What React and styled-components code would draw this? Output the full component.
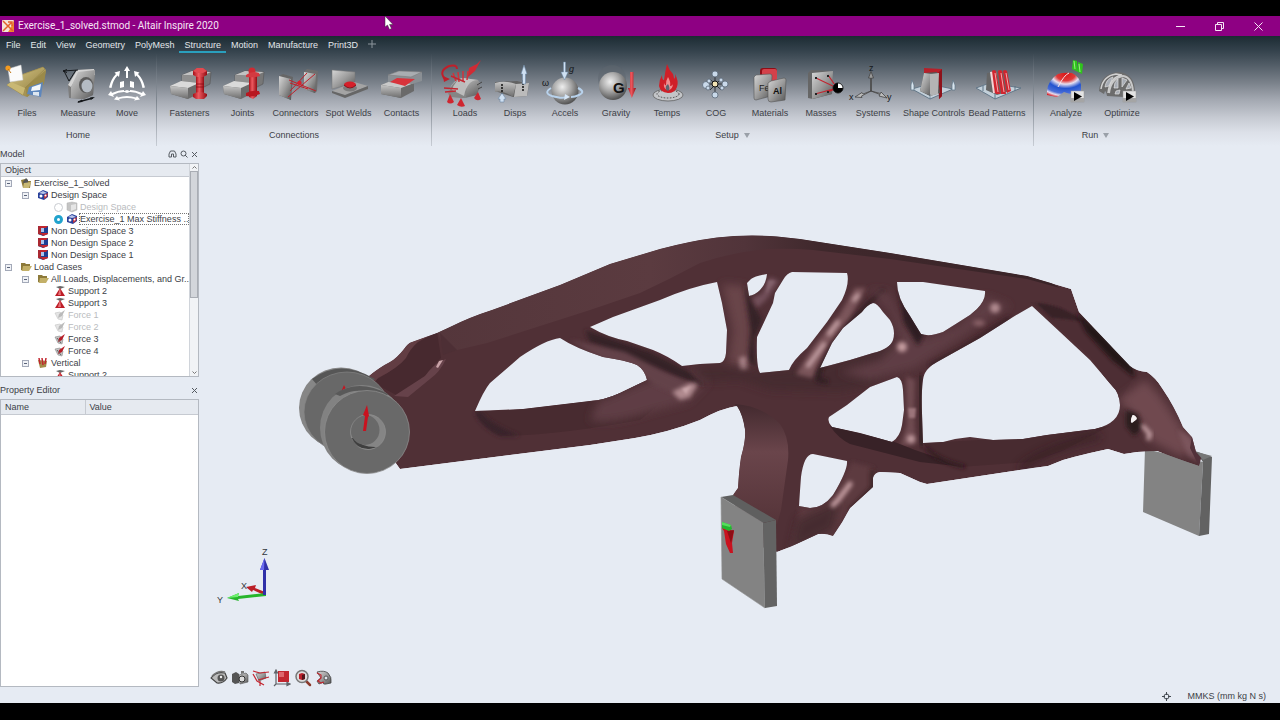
import React, { useState } from "react";
import styled, { createGlobalStyle } from "styled-components";

const GlobalStyle = createGlobalStyle`
  * {
    box-sizing: border-box;
  }
  body {
    margin: 0;
    background: #000;
    font-family: "Liberation Sans", Arial, sans-serif;
    font-size: 9px;
    line-height: 12px;
    color: #3c4046;
  }
  button {
    font: inherit;
    color: inherit;
    background: none;
    border: 0;
    padding: 0;
  }
`;

const Screen = styled.div`
  height: 100vh;
  padding: 16px 0 17px;
  background: #000;
`;

const Window = styled.div`
  position: relative;
  height: 100%;
  display: flex;
  flex-direction: column;
  background: #e6ebf3;
`;

const TitleBar = styled.header`
  flex: none;
  height: 20px;
  display: flex;
  align-items: center;
  gap: 4px;
  padding: 0 2px;
  background: #8e0083;
  color: #f6e6f5;
`;

const Title = styled.h1`
  flex: 1;
  margin: 0;
  font-family: Roboto, "Open Sans", sans-serif;
  font-size: 10px;
  font-weight: 400;
`;

const WindowButtons = styled.div`
  display: flex;
`;

const WindowButton = styled.button`
  width: 39px;
  height: 20px;
  display: grid;
  place-items: center;
`;

const Pointer = styled.svg`
  position: absolute;
  left: 30%;
  top: 0;
`;

const RibbonArea = styled.div`
  flex: none;
  background: linear-gradient(
    #1c2b33 0,
    #33414b 14px,
    #525d67 29px,
    #7b828b 47px,
    #a2a7b0 63px,
    #c5c9d1 81px,
    #dce0e8 96px,
    #e6ebf3 110px
  );
`;

const Menu = styled.nav`
  display: flex;
  height: 18px;
  padding-left: 1px;
`;

const MenuItem = styled.button`
  height: 17px;
  padding: 3px 5px 0;
  color: #e3e7ea;
  border-bottom: 2px solid ${(props) => (props.$active ? "#2a9fbd" : "transparent")};
`;

const Ribbon = styled.div`
  display: flex;
  height: 92px;
`;

const Group = styled.section`
  flex: none;
  width: ${(props) => props.$width}px;
  display: flex;
  flex-direction: column;
  border-right: 1px solid transparent;
  border-image: ${(props) =>
    props.$last ? "none" : "linear-gradient(#4b565f00, #7d858e 50%, #c9ced6) 1"};
`;

const Tools = styled.div`
  display: flex;
  padding: 6px 0 0 ${(props) => props.$start}px;
`;

const Tool = styled.button`
  width: ${(props) => props.$width}px;
  display: flex;
  flex-direction: column;
  align-items: center;
  gap: 3px;
  white-space: nowrap;

  svg {
    overflow: visible;
  }
`;

const GroupLabel = styled.div`
  display: flex;
  align-items: center;
  justify-content: center;
  gap: 5px;
  margin-top: 10px;
`;

const Arrow = styled.span`
  border: 3px solid transparent;
  border-top: 5px solid #9aa0a8;
  border-bottom: 0;
`;

const Main = styled.main`
  flex: 1;
  min-height: 0;
  display: flex;
`;

const Side = styled.aside`
  flex: none;
  width: 200px;
  display: grid;
  grid-template-rows: 17px minmax(0, 214fr) 22px minmax(0, 288fr);
`;

const PanelHead = styled.div`
  display: flex;
  align-items: flex-end;
  justify-content: space-between;
  padding-bottom: 3px;
`;

const HeadButtons = styled.div`
  display: flex;
`;

const HeadButton = styled.button`
  width: 11px;
  height: 12px;
  display: grid;
  place-items: center;
`;

const TreeBox = styled.div`
  display: flex;
  width: 199px;
  overflow: hidden;
  border: 1px solid #b4b9c1;
  background: #fff;
`;

const TreeBody = styled.div`
  flex: 1;
  min-width: 0;
`;

const TreeHead = styled.div`
  height: 13px;
  padding-left: 4px;
  background: #e6eaf0;
  border-bottom: 1px solid #c6cad1;
`;

const Tree = styled.ul`
  margin: 0;
  padding: 0;
  list-style: none;
`;

const indents = [4, 21, 36, 53];

const Row = styled.li`
  display: flex;
  align-items: center;
  height: 12px;
  padding-left: ${(props) => indents[props.$depth]}px;
  color: ${(props) => (props.$off ? "#b9bbbe" : "#3c4046")};
  white-space: nowrap;
`;

const RowIcon = styled.svg`
  flex: none;
  width: 12px;
  height: 12px;
  margin-right: 2px;
  opacity: ${(props) => (props.$off ? 0.5 : 1)};
`;

const Toggle = styled.button`
  flex: none;
  width: 7px;
  height: 7px;
  margin-right: 8px;
  border: 1px solid #a3a9b8;
  background: linear-gradient(#5a6379, #5a6379) center / 3px 1px no-repeat #f0f2f6;
`;

const Radio = styled.input`
  appearance: none;
  flex: none;
  width: 9px;
  height: 9px;
  margin: 0 3px 0 0;
  border: 1px solid #c9ccd1;
  border-radius: 50%;
  background: #fff;

  &:checked {
    border: 3px solid #21a3cd;
  }
`;

const RowText = styled.label`
  outline: ${(props) => (props.$focus ? "1px dotted #777" : "none")};
  outline-offset: -1px;
  ${(props) => props.$focus && "flex-grow: 1; padding-left: 1px; margin-left: -1px;"}
`;

const ScrollBar = styled.div`
  flex: none;
  width: 9px;
  display: flex;
  flex-direction: column;
  align-items: center;
  justify-content: space-between;
  border-left: 1px solid #d0d4da;
  background: #f1f3f6;
`;

const Thumb = styled.div`
  width: 100%;
  flex: 0 0 60%;
  border: 1px solid #a9adb4;
  background: #d3d6db;
  margin-bottom: auto;
`;

const PropertyBox = styled.div`
  width: 199px;
  border: 1px solid #b4b9c1;
  background: #fff;
`;

const PropertyTable = styled.table`
  width: 100%;
  border-collapse: collapse;
  table-layout: fixed;

  th {
    height: 14px;
    padding: 0 4px;
    font-weight: 400;
    text-align: left;
    background: #e6eaf0;
    border-bottom: 1px solid #c6cad1;
  }
  th:first-child {
    width: 84px;
    border-right: 1px solid #c6cad1;
  }
`;

const Viewport = styled.div`
  position: relative;
  flex: 1;
  min-width: 0;
`;

const Scene = styled.svg`
  display: block;
  width: 100%;
  height: 100%;
`;

const Triad = styled.svg`
  position: absolute;
  left: 12px;
  bottom: 77px;
`;

const ViewTools = styled.div`
  position: absolute;
  left: 10px;
  bottom: 0;
  display: flex;
  gap: 3px;
`;

const ViewTool = styled.button`
  width: 18px;
  height: 18px;
`;

const StatusBar = styled.footer`
  flex: none;
  height: 16px;
  display: flex;
  align-items: center;
  justify-content: flex-end;
  gap: 17px;
  padding: 2px 14px 0 0;
`;

const HiddenDefs = styled.svg`
  position: absolute;
`;

function Gradients() {
  return (
    <HiddenDefs width="0" height="0" aria-hidden="true">
      <defs>
        <linearGradient id="steel" x1="0" y1="0" x2="1" y2="1">
          <stop offset="0" stopColor="#d6d6d6" />
          <stop offset="0.5" stopColor="#9c9c9c" />
          <stop offset="1" stopColor="#555" />
        </linearGradient>
        <linearGradient id="steelSide" x1="0" y1="0" x2="0" y2="1">
          <stop offset="0" stopColor="#c4c4c4" />
          <stop offset="1" stopColor="#6d6d6d" />
        </linearGradient>
        <linearGradient id="redRod" x1="0" y1="0" x2="1" y2="0">
          <stop offset="0" stopColor="#a80f18" />
          <stop offset="0.4" stopColor="#ee5a60" />
          <stop offset="1" stopColor="#930c13" />
        </linearGradient>
        <radialGradient id="ball" cx="0.4" cy="0.35" r="0.65">
          <stop offset="0" stopColor="#eee" />
          <stop offset="0.5" stopColor="#a9a9a9" />
          <stop offset="1" stopColor="#555" />
        </radialGradient>
        <linearGradient id="folder" x1="0" y1="0" x2="1" y2="1">
          <stop offset="0" stopColor="#d9c98a" />
          <stop offset="1" stopColor="#8d7a3a" />
        </linearGradient>
        <radialGradient id="stress" cx="0.55" cy="0.05" r="1">
          <stop offset="0" stopColor="#d81818" />
          <stop offset="0.28" stopColor="#e03a3a" />
          <stop offset="0.42" stopColor="#e6dff0" />
          <stop offset="0.6" stopColor="#2353cf" />
          <stop offset="0.8" stopColor="#4a6ed8" />
          <stop offset="0.9" stopColor="#e8dcea" />
          <stop offset="1" stopColor="#d8202a" />
        </radialGradient>
      </defs>
    </HiddenDefs>
  );
}

const Blocks = () => (
  <>
    <path d="M14 15 24 11 43 12 42 24 32 29 14 27Z" fill="#777" stroke="#555" strokeWidth="0.6" />
    <path d="M14 15 24 11 43 12 34 16Z" fill="#c2c2c2" />
    <path d="M14 15 34 16V24H14Z" fill="#8f8f8f" />
    <path d="M2 26 13 21 31 23 30 34 20 39 3 34Z" fill="#6b6b6b" />
    <path d="M2 26 13 21 31 23 20 28Z" fill="#dadada" />
    <path d="M2 26 20 28V39L3 34Z" fill="url(#steelSide)" />
  </>
);

const Play = ({ x }) => (
  <>
    <rect x={x} y="31" width="13" height="11" fill="#e4e4e4" stroke="#999" strokeWidth="0.5" />
    <rect x={x} y="38" width="13" height="4" fill="#a5a5a5" />
    <path d={`M${x + 3} 32l8 4.5-8 4.5z`} fill="#000" />
  </>
);

const icons = {
  files: (
    <>
      <path d="M2 25 18 14 38 7 41 10 38 24 22 37 17 35Z" fill="url(#folder)" />
      <path d="M20 27 41 10 39 24 22 37Z" fill="#9b8a49" />
      <path d="M24 27 38 22 36 37 22 34Z" fill="#5e87bd" />
      <path d="M27 27 36 24 35 30 26 31Z" fill="#f4f7fa" />
      <path d="M28 32 34 32 34 36 28 35Z" fill="#dde6f0" />
      <path d="M2 25 16 15 38 7 40 9 20 28 18 35Z" fill="url(#folder)" stroke="#8c7b41" strokeWidth="0.5" />
      <path d="M2 25 18 35 20 28 6 22Z" fill="#c9b874" />
      <path d="M3 9 16 5 18 20 5 22Z" fill="#fbfbfb" stroke="#c9c9c9" strokeWidth="0.5" />
      <circle cx="3" cy="8" r="2.6" fill="#f39a1f" />
      <path d="M3 9 6 13" stroke="#c07312" />
    </>
  ),
  measure: (
    <>
      <path d="M21 10 38 9 39 15 37 35 28 39 13 38 12 25Z" fill="#7d7d7d" />
      <path d="M21 10 38 9 39 15 22 16 15 27 12 25Z" fill="#d4d4d4" />
      <path d="M22 12 39 10 37 35 28 39 15 38 15 27Z" fill="url(#steel)" />
      <ellipse cx="30" cy="25" rx="7" ry="8" fill="#5b5b5b" />
      <ellipse cx="31" cy="26" rx="5.5" ry="6.5" fill="#b5bcc4" />
      <path d="M7 11 22 10M8 11 13 21 20 10M7 11l4-1.5M7 11l4 1.5" stroke="#15181b" strokeWidth="1" fill="none" />
      <path d="M22 42 37 38" stroke="#15181b" strokeWidth="1.4" />
      <path d="M21 42.5l5-3 .5 2.5zM39 37l-5 .5.8 2.6z" fill="#15181b" />
    </>
  ),
  move: (
    <g fill="#fff">
      <path d="M22 6 25 11H23V18H21V11H19Z" />
      <path d="M15 11 14 17 12.500 15.500Q8 20 6.500 28L4 27.500Q6 19 11 14L9.500 12.500Z" />
      <path d="M29 11 30 17 31.500 15.500Q36 20 37.500 28L40 27.500Q38 19 33 14L34.500 12.500Z" />
      <path d="M3 35 6 31 7 33Q14 30 19 30L19 32Q13 32 8 35L9 37ZM41 35 38 31 37 33Q30 30 25 30L25 32Q31 32 36 35L35 37Z" />
      <path d="M15 22 19 21V27L15 28ZM29 22 25 21V27L29 28ZM22 30 26 31.500 22 33 18 31.500Z" />
      <path d="M13 37.500Q22 34.500 31 37.500L32 36 35 39.500 29 40.500 30 39Q22 37 14 39L15 40.500 9 39.500 12 36Z" />
    </g>
  ),
  fasteners: (
    <>
      <Blocks />
      <path d="M28 15H36V35H28Z" fill="url(#redRod)" />
      <path d="M25 11 29 8H35L39 11V15L35 17H29L25 15Z" fill="url(#redRod)" />
      <path d="M25 11 29 8H35L39 11 35 13H29Z" fill="#e14a50" />
      <path d="M25 34Q32 30 39 34V36L36 39H28L25 37Z" fill="url(#redRod)" />
      <path d="M28 24H36M28 27H36" stroke="#8c0b12" strokeWidth="0.8" />
    </>
  ),
  joints: (
    <>
      <Blocks />
      <path d="M28 13H36V36L32 39 28 37Z" fill="url(#redRod)" />
      <circle cx="31" cy="11" r="3.500" fill="#cf2a32" />
      <path d="M25 15Q31 10 38 13L39 16Q32 18 25 17Z" fill="#d43a41" />
      <path d="M25 33Q31 30 38 31L39 34Q32 37 25 36Z" fill="#b81720" />
    </>
  ),
  connectors: (
    <>
      <path d="M5 16 9 14 19 17 17 40 5 35Z" fill="#666" />
      <path d="M5 16 17 19V40L5 35Z" fill="url(#steel)" />
      <path d="M30 12 33 9 44 11 43 31 41 33 30 29Z" fill="#6e6e6e" />
      <path d="M30 12 42 14 41 33 30 29Z" fill="url(#steel)" />
      <path d="M15 20 42 31M14 37 41 14M16 23 34 29M16 31 33 13" stroke="#c0202a" strokeWidth="1" />
      <circle cx="25.500" cy="23" r="2.200" fill="#d8222d" />
    </>
  ),
  spotwelds: (
    <>
      <path d="M5 10 28 12V23L5 29Z" fill="url(#steel)" stroke="#777" strokeWidth="0.5" />
      <path d="M5 31 27 22 41 26 18 35Z" fill="#a4a4a4" />
      <path d="M5 31 18 35 41 26V29L18 38 5 33Z" fill="#666" />
      <ellipse cx="23" cy="28" rx="7" ry="3.500" fill="#7c7c7c" />
      <ellipse cx="23" cy="24.500" rx="6" ry="3" fill="#d5202a" />
      <path d="M17 25Q23 31 29 25" stroke="#8c1018" fill="none" />
    </>
  ),
  contacts: (
    <>
      <path d="M1 25 13 20 34 23V31L21 38 1 34Z" fill="#6a6a6a" />
      <path d="M1 25 13 20 34 23 21 28Z" fill="#c9c9c9" />
      <path d="M1 25 21 28V38L1 34Z" fill="url(#steelSide)" />
      <path d="M8 15 19 11 42 12V21L32 24 8 22Z" fill="#8a8f94" />
      <path d="M8 15 19 11 42 12 31 17Z" fill="#a9adb1" stroke="#777" strokeWidth="0.5" />
      <path d="M10 22 17 18 35 19 25 26Z" fill="#d8333b" />
    </>
  ),
  loads: (
    <>
      <path d="M5 34Q9 19 20 18L35 20Q37 22 37 26L34 35 22 38 8 37Z" fill="url(#steel)" />
      <path d="M5 34Q9 20 20 19Q25 26 23 38L8 37Z" fill="#858585" />
      <path d="M9 30Q12 20 20 18L35 20Q24 20 21 36Z" fill="#c9c9c9" opacity="0.800" />
      <path d="M2 19Q-5 11 6 6Q14 4 14 9" stroke="#bf1f2a" strokeWidth="2" fill="none" />
      <path d="M0 16 7 19 1 22Z" fill="#bf1f2a" />
      <path d="M10 13 13 21M15 12 16 22M20 11 20 21M25 11 24 20" stroke="#d0333c" strokeWidth="1.500" />
      <path d="M8 16 22 22M1 28 15 29M2 32 13 31" stroke="#c22631" strokeWidth="1.500" />
      <path d="M38 0 32 11 25 17 26 8 34 4Z" fill="#d02a34" />
      <path d="M7 34 11 42Q7 45 4 42ZM18 38 22 46Q18 48 14 45ZM35 32 38 39Q34 42 31 38Z" fill="#cf2630" />
      <path d="M34 25 39 22M35 29 39 27" stroke="#444" />
    </>
  ),
  disps: (
    <>
      <path d="M2 22 24 21 36 24 34 36 20 37 2 31Z" fill="#626262" />
      <path d="M2 23Q12 20 23 24L20 37Q10 30 2 32Z" fill="url(#steelSide)" />
      <path d="M23 24 36 23 34 36 21 37Z" fill="#bbb" />
      <path d="M9 24V34M30 20V32" stroke="#111" strokeWidth="1.500" strokeDasharray="2 1" />
      <path d="M31 5 34 14H32.500V24H29.500V14H28Z" fill="#cfe0f2" stroke="#6d88a5" strokeWidth="0.600" />
      <path d="M9 33 13 39H11V42H7V39H5Z" fill="#cfe0f2" stroke="#6d88a5" strokeWidth="0.600" />
    </>
  ),
  accels: (
    <>
      <circle cx="22" cy="31" r="13.500" fill="url(#ball)" />
      <path d="M8 28Q0 33 9 36Q20 39 22 37M35 28Q43 32 36 35Q32 37 28 37" stroke="#b8d2ec" strokeWidth="2" fill="none" />
      <path d="M22 34 27 37 21 40Z" fill="#d6e6f7" />
      <path d="M20.500 2H22.500V12H25L21.500 20 18 12H20.500Z" fill="#cfe0f2" stroke="#6d88a5" strokeWidth="0.500" />
      <text x="26" y="12" fontSize="9" fontStyle="italic" fill="#15181b">g</text>
      <text x="-1" y="26" fontSize="9" fill="#15181b">ω</text>
    </>
  ),
  gravity: (
    <>
      <circle cx="18" cy="19" r="14" fill="#5e656d" opacity="0.5" />
      <circle cx="19" cy="26" r="14" fill="url(#ball)" />
      <text x="19" y="33" fontSize="15" fontWeight="700" fill="#111">G</text>
      <path d="M36 12H39.500V28H42L37.800 38 34 28H36Z" fill="url(#redRod)" />
    </>
  ),
  temps: (
    <>
      <ellipse cx="23" cy="35" rx="15" ry="6" fill="#c3c5c8" stroke="#555" strokeWidth="0.700" />
      <ellipse cx="23" cy="34" rx="11" ry="4" fill="none" stroke="#444" strokeDasharray="1.500 1.500" />
      <path d="M22 4Q24 10 28 14 29 17 29 19 31 17 30 14 34 21 32 27 30 33 23 33 15 32 14 26 14 20 17 15 17 20 19 20 20 12 22 4Z" fill="#cf1f28" />
      <path d="M23 17Q26 22 25 26 28 26 28 23 28 30 23 30 18 29 19 23 20 26 21 25 21 20 23 17Z" fill="#ef8c8f" />
      <path d="M23 24Q26 29 23 31 20 30 21 26Z" fill="#5b6670" />
    </>
  ),
  cog: (
    <>
      <path d="M21 13V36M11 24H33M16 19 27 30M27 19 16 30" stroke="#30353a" strokeWidth="1" />
      {[[21, 14, 3], [21, 35, 3], [12, 25, 3.5], [31, 24, 3], [15, 21, 2], [27, 20, 2], [14, 28, 2], [28, 28, 2]].map(([x, y, r]) => (
        <circle key={`${x}-${y}`} cx={x} cy={y} r={r} fill="#c9d9ea" stroke="#5c6a78" strokeWidth="0.800" />
      ))}
      <circle cx="21" cy="24" r="3" fill="#f2e3b4" stroke="#111" />
    </>
  ),
  materials: (
    <>
      <rect x="12" y="8" width="17" height="24" rx="3" fill="#8f0e17" />
      <rect x="14" y="9" width="15" height="22" rx="2" fill="#d4414a" />
      <path d="M8 15 22 14Q24 14 24 16L23 36 8 40Q6 40 6 38V17Z" fill="url(#steel)" stroke="#555" strokeWidth="0.600" />
      <text x="11" y="31" fontSize="9" fill="#222">Fe</text>
      <path d="M23 21 36 18Q38 18 38 20L37 40 23 42Q20 42 20 39V23Z" fill="url(#steel)" stroke="#555" strokeWidth="0.600" />
      <text x="25" y="34" fontSize="9" fontWeight="700" fill="#111">Al</text>
    </>
  ),
  masses: (
    <>
      <path d="M9 13 12 10 34 11 33 34 14 39 9 38Z" fill="#666" />
      <path d="M13 13 34 11 33 34 13 39Z" fill="url(#steel)" />
      <path d="M17 18 38 28 16 34M29 15 38 28 29 32" stroke="#c22530" strokeWidth="1.200" fill="none" />
      <path d="M16 17h2v2h-2zM28 15h2v2h-2zM16 33h2v2h-2zM28 31h2v2h-2z" fill="#222" />
      <circle cx="39" cy="28" r="5" fill="#fff" stroke="#000" strokeWidth="0.800" />
      <path d="M39 28V23A5 5 0 0 0 34 28ZM34 28A5 5 0 0 0 44 28Z" fill="#000" />
    </>
  ),
  systems: (
    <>
      <path d="M19.500 31V18H17.500L20 11.500 22.500 18H20.500V31Z" fill="#999" stroke="#444" strokeWidth="0.800" />
      <path d="M20 31 12 34 11 32.500 4 37 11 37.500 10.500 36 20 31 29 34.500 28 36 36 38 30 32 29.500 33.500Z" fill="#bbb" stroke="#444" strokeWidth="0.800" />
      <text x="18" y="11" fontSize="9" fill="#15181b">z</text>
      <text x="-2" y="40" fontSize="9" fill="#15181b">x</text>
      <text x="36" y="40" fontSize="9" fill="#15181b">y</text>
    </>
  ),
  shape: (
    <>
      <path d="M0 29 17 24 41 29 18 39Z" fill="#c3d0da" stroke="#5d7384" strokeWidth="0.900" />
      <path d="M12 8 30 9V36L27 39V13H12Z" fill="#b7202a" />
      <path d="M26 13 30 9V36L27 39Z" fill="#8e121b" />
      <path d="M12 13 25 12 28 33 18 36 8 31Z" fill="#555" />
      <path d="M12 13 20 14 19 36 8 31Z" fill="url(#steel)" />
      <path d="M18 14 27 13 26 34 18 36Z" fill="#b4b4b4" />
      <path d="M0 20 2 25V30H-1V25ZM41 20 43 25V30H40V25ZM18 34V39" fill="#d9e5ef" stroke="#5d7384" strokeWidth="0.700" />
    </>
  ),
  bead: (
    <>
      <path d="M1 28 15 23 46 28 20 39Z" fill="#c3d0da" stroke="#5d7384" strokeWidth="0.900" />
      <path d="M12 13 30 10 35 31 22 35 11 30Z" fill="#666" />
      <path d="M15 12 21 11 24 34 18 33Z" fill="#f1d5d6" />
      <path d="M17 11Q19 9 21 11L25 34 20 34ZM23 11Q25 9 27 11L31 34 26 34ZM28 11Q30 9 32 11L36 31 32 33Z" fill="#d0252f" />
      <path d="M20 13 23 32M26 13 29 32M31 13 34 30" stroke="#f6b5b8" strokeWidth="0.900" />
      <path d="M20 33V39M40 26V31M8 26V31" stroke="#5d7384" />
    </>
  ),
  analyze: (
    <>
      <path d="M3 31Q4 20 14 14Q20 12 28 13Q36 17 37 25L37 33 29 35 20 32 13 37 3 35Z" fill="url(#stress)" />
      <path d="M14 27Q20 15 25 13" stroke="#f6e3e8" strokeWidth="1" fill="none" />
      <path d="M29 0 33 1 34 12 28 9ZM34 2 39 4 38 14 34 12Z" fill="#2fc41c" />
      <path d="M30 1 31 9M35 4 36 12" stroke="#95f27e" />
      <Play x={27} />
    </>
  ),
  optimize: (
    <>
      <path d="M-1 31Q0 14 18 12 35 13 35 33L24 37 7 36Q6 31 5 31L4 34Z" fill="#6c6c6c" />
      <path d="M1 29Q3 16 16 14L22 15Q10 17 8 33" fill="none" stroke="#d1d1d1" strokeWidth="1.500" />
      <path d="M9 33Q11 18 23 16 32 17 33 32" fill="none" stroke="#c9c9c9" strokeWidth="2" />
      <path d="M5 27Q6 19 13 17L9 26ZM14 28Q14 22 18 19L18 28ZM22 18 27 20 22 27ZM29 23 31 28 26 29ZM16 31 20 30 19 34 15 34Z" fill="#a8adb5" stroke="#e0e0e0" strokeWidth="0.700" />
      <Play x={23} />
    </>
  ),
};

const groups = [
  {
    label: "Home",
    width: 157,
    start: 1,
    tools: [
      ["Files", "files", 52],
      ["Measure", "measure", 50],
      ["Move", "move", 48],
    ],
  },
  {
    label: "Connections",
    width: 275,
    start: 6,
    tools: [
      ["Fasteners", "fasteners", 53],
      ["Joints", "joints", 53],
      ["Connectors", "connectors", 53],
      ["Spot Welds", "spotwelds", 53],
      ["Contacts", "contacts", 53],
    ],
  },
  {
    label: "Setup",
    width: 602,
    start: 8,
    more: true,
    tools: [
      ["Loads", "loads", 50],
      ["Disps", "disps", 50],
      ["Accels", "accels", 50],
      ["Gravity", "gravity", 52],
      ["Temps", "temps", 50],
      ["COG", "cog", 48],
      ["Materials", "materials", 60],
      ["Masses", "masses", 42],
      ["Systems", "systems", 62],
      ["Shape Controls", "shape", 60],
      ["Bead Patterns", "bead", 66],
    ],
  },
  {
    label: "Run",
    width: 124,
    start: 4,
    more: true,
    tools: [
      ["Analyze", "analyze", 56],
      ["Optimize", "optimize", 56],
    ],
  },
];

const menus = ["File", "Edit", "View", "Geometry", "PolyMesh", "Structure", "Motion", "Manufacture", "Print3D"];

const rowIcons = {
  assembly: (
    <>
      <path d="M1 3 5 2 6 4 11 4 10 11 3 11Z" fill="#8d7a3a" />
      <path d="M3 5 6 1 8 3 8 8 5 9Z" fill="#555" />
      <path d="M4 6 11 5 9 11 3 11Z" fill="#c9b975" />
    </>
  ),
  optimized: (
    <>
      <path d="M1 4 6 1 11 3 11 8 7 11 1 9Z" fill="#273f9a" />
      <path d="M2 4 6 2 10 4 6 5Z" fill="#b8c4ea" />
      <circle cx="4" cy="7" r="1.500" fill="#fff" />
      <path d="M7 6 11 4 10 8 7 10Z" fill="#c2343c" />
      <circle cx="8.500" cy="6.500" r="1" fill="#fff" />
    </>
  ),
  greyPart: (
    <>
      <path d="M1 2 6 1 11 2V9L6 11 1 9Z" fill="#8a8a8a" stroke="#666" strokeWidth="0.500" />
      <path d="M5 4 10 3V8L5 10Z" fill="#ccc" />
    </>
  ),
  part: (
    <>
      <path d="M1 1H11V9L6 11 1 9Z" fill="#1f3f93" />
      <path d="M1 1H11L9 3H3Z" fill="#c2262f" />
      <path d="M1 1 4 3V10L1 9Z" fill="#a92831" />
      <path d="M4 3H7V7H4Z" fill="#a9c4ee" />
      <path d="M4 9 6 11 11 9V8H4Z" fill="#c2262f" />
    </>
  ),
  folder: (
    <>
      <path d="M1 2 5 2 6 3 10 3V6L3 10 1 9Z" fill="#8d7a3a" />
      <path d="M3 5H12L9 10H2Z" fill="#c3b068" />
    </>
  ),
  support: (
    <>
      <path d="M2 2 6 1 11 2 6 4Z" fill="#666" />
      <path d="M6 3 11 11H1Z" fill="#bd1c26" />
      <path d="M6 3 7 10H4Z" fill="#e77278" />
    </>
  ),
  force: (
    <>
      <path d="M1 4 6 3 9 6 8 11 4 10Z" fill="#c4c4c4" stroke="#888" strokeWidth="0.600" />
      <path d="M11 1 8 7 4 9 5 5Z" fill="#b71e28" />
      <path d="M3 5 7 10" stroke="#666" />
    </>
  ),
  forceOff: (
    <>
      <path d="M1 4 6 3 9 6 8 11 4 10Z" fill="#ccc" stroke="#888" strokeWidth="0.600" />
      <path d="M11 1 8 7 4 9 5 5Z" fill="#777" />
    </>
  ),
  loadcase: (
    <>
      <path d="M1 3 10 4 9 10 3 11Z" fill="#a28b48" />
      <path d="M2 1 3 7M5 1 6 8M9 1 8 7" stroke="#c2262f" strokeWidth="1.500" />
    </>
  ),
};

const tree = [
  { text: "Exercise_1_solved", depth: 0, icon: "assembly", open: true },
  { text: "Design Space", depth: 1, icon: "optimized", open: true },
  { text: "Design Space", depth: 3, icon: "greyPart", radio: true, off: true },
  { text: "Exercise_1 Max Stiffness ..", depth: 3, icon: "optimized", radio: true, focus: true },
  { text: "Non Design Space 3", depth: 2, icon: "part" },
  { text: "Non Design Space 2", depth: 2, icon: "part" },
  { text: "Non Design Space 1", depth: 2, icon: "part" },
  { text: "Load Cases", depth: 0, icon: "folder", open: true },
  { text: "All Loads, Displacements, and Gr..", depth: 1, icon: "folder", open: true },
  { text: "Support 2", depth: 3, icon: "support" },
  { text: "Support 3", depth: 3, icon: "support" },
  { text: "Force 1", depth: 3, icon: "forceOff", off: true },
  { text: "Force 2", depth: 3, icon: "forceOff", off: true },
  { text: "Force 3", depth: 3, icon: "force" },
  { text: "Force 4", depth: 3, icon: "force" },
  { text: "Vertical", depth: 1, icon: "loadcase", open: true },
  { text: "Support 2", depth: 3, icon: "support" },
];

const Cross = () => (
  <svg width="7" height="7" viewBox="0 0 7 7" stroke="#555a61" strokeWidth="1">
    <path d="M1 1 6 6M6 1 1 6" />
  </svg>
);

const BODY =
  "M369 376Q380 367 390 362Q397 358 404 349Q408 343 412 342L437 333 450 327Q470 317 492 310L560 285 610 264 660 249Q690 241 717 237.500Q747 234 777 236.500L800 239 890 253 1027 276 1071 289 1079 312 1093 327 1130 366Q1136 371 1147 372Q1156 378 1162 388Q1175 407 1183 427L1192 437 1196 452 1201 458 1199 466 1187 462Q1170 456 1157 451L1137 452 1124 454 1108 449 1090 453Q1073 457 1063 460L1048 466 1033 468 927 484 920 482 900 473 880 472Q874 473 873 478L873 487 850 508Q843 522 833 536Q826 533 818 534L790 547 777 552 740 540 733 495 738 488Q739 470 741 457Q746 440 745 430Q743 415 737 406Q722 408 700 420Q670 432 635 438L590 445 400 469 390 455Z";

const HOLES = [
  "M475 411Q484 390 490 383L520 357Q545 340 560 338Q575 348 603 357Q625 360 637 365Q645 370 647 380L620 393Q605 400 590 401L523 409Z",
  "M590 327 613 317 660 300Q690 287 717 282L722 303 727 330 726 353Q725 362 720 363L700 364 682 366Q668 356 653 350L627 341Q607 337 590 327Z",
  "M767 274Q755 276 751 279L747 283 749 296Q755 295 760 290Q766 284 767 274Z",
  "M792 272 847 273Q850 283 842 300L827 322 807 348Q793 360 789 370L760 373Q756 367 757 337L773 303 775 293 783 280Q787 273 792 272Z",
  "M873 303Q867 305 862 312L843 328 832 343 820 368 850 360 873 353Q890 349 893 340Q896 330 890 320L883 312Q877 303 873 303Z",
  "M897 282 923 282 985 291Q986 300 977 309L970 315 943 332Q930 337 921 334L910 316Q897 298 897 282Z",
  "M1032 306 1013 317 980 338 937 362Q928 367 925 373Q921 380 922 413L923 443 943 442 955 439 970 437 993 440 1023 439 1047 435 1095 429Q1120 423 1120 405Q1119 392 1113 387L1090 360 1060 332Z",
  "M897 377 870 387 847 405 829 417Q827 422 832 427L860 433 892 442Q900 437 902 425L904 410 903 390Q902 378 897 377Z",
  "M813 454 847 461Q848 470 833 495Q823 508 810 508L799 506Q800 490 801 477Q804 454 813 454Z",
  "M1133 415Q1130 419 1131 423L1136 420Q1135 415 1133 415Z",
];

function Frame() {
  const shape = [BODY, ...HOLES].join(" ");
  return (
    <>
      <defs>
        <clipPath id="frameClip">
          <path d={shape} clipRule="evenodd" />
        </clipPath>
        <filter id="soft1" x="-50%" y="-50%" width="200%" height="200%">
          <feGaussianBlur stdDeviation="1.2" />
        </filter>
        <filter id="soft2" x="-50%" y="-50%" width="200%" height="200%">
          <feGaussianBlur stdDeviation="2" />
        </filter>
        <filter id="soft4" x="-50%" y="-50%" width="200%" height="200%">
          <feGaussianBlur stdDeviation="4" />
        </filter>
        <linearGradient id="topFace" x1="0" y1="0" x2="1" y2="0">
          <stop offset="0" stopColor="#54363b" />
          <stop offset="0.35" stopColor="#5b3b40" />
          <stop offset="0.5" stopColor="#51343a" />
          <stop offset="0.62" stopColor="#3f282c" />
          <stop offset="1" stopColor="#3a2428" />
        </linearGradient>
        <linearGradient id="legFace" x1="0" y1="0" x2="0" y2="1">
          <stop offset="0" stopColor="#432a2f" />
          <stop offset="0.4" stopColor="#6a454b" />
          <stop offset="1" stopColor="#553439" />
        </linearGradient>
      </defs>
      <g clipPath="url(#frameClip)">
        <path d={BODY} fill="#503036" />
        <path d="M430 330 492 290 600 250 700 220 800 225 1030 270 1060 288 1027 279 890 259 813 250Q790 248 767 249Q733 252 700 263Q670 279 640 293L590 310 487 343 457 350 445 352 438 333Z" fill="url(#topFace)" />
        <path d="M437 332 441 358Q434 364 430 372L398 396 372 382Q398 368 405 358Q410 346 416 342Z" fill="#47292f" />
        <path d="M366 374 390 360 404 347 412 340 438 331 418 342Q410 349 406 358Q398 368 378 378L374 383Z" fill="#623d43" />
        <path d="M441 361 446 359Q440 372 430 379L408 397 394 396 425 376Q432 366 441 361Z" fill="#66424a" />
        <path d="M436 367 439 361 443 360 438 368Z" fill="#c9a3a8" />
        <path d="M440 333 457 350 443 355Z" fill="#4d2f35" />
        {/* inner surface of the lower arm */}
        <path d="M475 412 523 409 590 401 648 380 690 380 640 420Q560 435 500 436Q482 428 475 412Z" fill="#482b30" />
        <path d="M475 413Q482 428 500 436L520 436Q490 424 480 411Z" fill="#39232a" filter="url(#soft2)" />
        <path d="M598 402 655 378 700 370 708 382 688 402 650 412Q610 425 590 420Z" fill="#5f3e44" filter="url(#soft4)" />
        {/* left strut */}
        <path d="M585 330 650 352 690 372 705 386 680 378 640 362 590 342Z" fill="#352125" filter="url(#soft2)" />
        <path d="M570 340 625 352 650 365 690 385 690 400 655 385 630 366 600 358Z" fill="#63424a" filter="url(#soft2)" />
        <path d="M672 392 690 383 698 384 690 397 680 400Z" fill="#b08a8f" filter="url(#soft2)" />
        <path d="M682 389 691 386 686 394Z" fill="#c9a5a9" filter="url(#soft1)" />
        {/* upright */}
        <path d="M722 284 745 286 750 320 752 366 728 366 733 330Z" fill="#694449" filter="url(#soft4)" />
        <path d="M744 282 751 300 762 320 754 340 756 368 748 360 751 330Z" fill="#352125" filter="url(#soft2)" />
        <path d="M739 358 746 356 747 370 740 370Z" fill="#a98388" filter="url(#soft2)" />
        <path d="M770 277 779 281 766 300 757 308 752 298 762 294Z" fill="#72505a" filter="url(#soft2)" />
        <path d="M768 280 775 281 766 294Z" fill="#82606a" filter="url(#soft1)" />
        <path d="M690 366 730 366 757 372 820 366 870 350 893 342 905 360 870 386 840 392 770 390 740 380 700 382Z" fill="#43292e" opacity="0.700" filter="url(#soft4)" />
        {/* diagonal strut */}
        <path d="M855 288 866 288 850 318 828 346 812 378 796 374 814 346 840 314Z" fill="#7a545a" filter="url(#soft2)" />
        <path d="M854 300 858 295M838 322 829 334M824 344 808 366" stroke="#c9a5a9" strokeWidth="4" strokeLinecap="round" filter="url(#soft2)" />
        <path d="M884 290 868 304 846 328 834 344 820 370 818 380 828 382" stroke="#2e1c20" strokeWidth="4" fill="none" filter="url(#soft2)" />
        {/* crossing node */}
        <path d="M870 290 890 312 900 340 880 360 840 372 870 380 915 368 950 345 990 318 1010 306 985 296 960 325 922 340 905 325 888 292Z" fill="#5f3e44" filter="url(#soft4)" />
        <path d="M898 286 912 314 924 334 918 346 904 322Z" fill="#2e1c20" filter="url(#soft2)" />
        <ellipse cx="902" cy="347" rx="5" ry="5" fill="#c49b9f" filter="url(#soft2)" />
        <ellipse cx="995" cy="308" rx="5" ry="5" fill="#b08a8f" filter="url(#soft2)" />
        <ellipse cx="979" cy="323" rx="6" ry="3" fill="#8a6268" filter="url(#soft2)" />
        <path d="M1010 318 960 350 930 366" stroke="#3a2327" strokeWidth="5" filter="url(#soft2)" />
        {/* lower right upright and beam */}
        <path d="M906 376 915 380 914 410 916 444 900 446 907 425Z" fill="#704b51" filter="url(#soft2)" />
        <path d="M920 375V420L922 446" stroke="#2e1c20" strokeWidth="4" fill="none" filter="url(#soft2)" />
        <path d="M908 408 916 408 915 418 909 418Z" fill="#9b747a" filter="url(#soft1)" />
        <ellipse cx="911" cy="439" rx="4" ry="4" fill="#c09a9e" filter="url(#soft2)" />
        <path d="M830 426 892 441 915 450 965 467 920 462 850 444Q838 438 830 426Z" fill="#382227" />
        <path d="M923 443 1020 438 1110 426 1060 452 1030 462 960 467Q935 460 923 443Z" fill="#482b30" />
        <path d="M1020 470Q1040 450 1100 436" stroke="#341f23" strokeWidth="7" fill="none" opacity="0.700" filter="url(#soft4)" />
        <path d="M926 448Q936 460 965 467" stroke="#2b191d" strokeWidth="3" fill="none" filter="url(#soft2)" />
        {/* right arm */}
        <path d="M1030 302 1060 306 1080 318 1135 375 1120 400 1090 356Z" fill="#4d2e34" />
        <path d="M1036 303Q1060 304 1085 322Q1060 318 1052 318Z" fill="#392328" filter="url(#soft1)" />
        <path d="M1076 312 1098 330 1132 366 1135 378 1112 360 1086 332Z" fill="#231418" filter="url(#soft2)" />
        <path d="M1118 400 1145 380 1160 396 1182 428 1196 450 1180 456 1150 440 1140 420Z" fill="#6f4a50" filter="url(#soft4)" />
        <path d="M1126 410 1138 414 1142 428 1134 436 1126 426Z" fill="#2c1a1e" filter="url(#soft2)" />
        <path d="M1142 425 1150 434 1148 440" stroke="#caa6aa" strokeWidth="4" fill="none" filter="url(#soft2)" />
        <path d="M1178 430 1192 437 1198 462 1188 456Z" fill="#89626a" opacity="0.600" filter="url(#soft2)" />
        <path d="M1192 436 1190 448 1199 466 1203 458Z" fill="#52313a" />
        {/* leg */}
        <path d="M735 404Q762 406 780 424Q790 438 788 460L781 510 777 524 733 496 745 430Z" fill="url(#legFace)" />
        <path d="M800 506Q822 512 834 495L848 470 852 462 874 468 874 490 848 512 833 538 790 548 798 520Z" fill="#5d3b41" filter="url(#soft2)" />
        <path d="M797 520 840 500 833 530 790 550Z" fill="#3c252a" opacity="0.700" filter="url(#soft4)" />
        <path d="M850 484 838 500 833 505" stroke="#c69fa3" strokeWidth="5" strokeLinecap="round" filter="url(#soft2)" />
        <path d="M872 470V488L850 510" stroke="#2d1b1f" strokeWidth="4" fill="none" opacity="0.700" filter="url(#soft2)" />
      </g>
      <path d="M1132.500 415Q1130 420 1132 423L1137 419Q1136 415 1132.500 415Z" fill="#f5f1f1" />
    </>
  );
}

function ModelScene() {
  return (
    <Scene viewBox="200 146 1080 541" role="img" aria-label="Optimized bracket">
      <path d="M1145 449 1203 462 1199 536 1143 512Z" fill="#838383" />
      <path d="M1195 451 1212 457 1209 534 1199 536 1203 462Z" fill="#626262" />
      <path d="M1197 452 1212 456 1203 460Z" fill="#777" />
      <Frame />
      <ellipse cx="341" cy="408" rx="42" ry="40.500" fill="#868686" />
      <path d="M312 379Q340 358 375 379L368 386Q340 366 318 386Z" fill="#565656" />
      <ellipse cx="347" cy="412" rx="43" ry="40" fill="#686868" stroke="#848484" strokeWidth="0.700" />
      <path d="M341 392 344 385 347 391Z" fill="#c01923" />
      <ellipse cx="362" cy="428" rx="42" ry="43" fill="#828282" />
      <path d="M335 394Q358 378 388 394L384 400Q362 384 340 396Z" fill="#595959" />
      <ellipse cx="367" cy="432" rx="42.500" ry="41.500" fill="#696969" stroke="#8b8b8b" strokeWidth="0.800" />
      <ellipse cx="368" cy="432" rx="17.500" ry="17.500" fill="#858585" />
      <path d="M351 438Q356 450 370 449L378 447Q362 448 354 438Z" fill="#3f3f3f" />
      <ellipse cx="365" cy="430" rx="14.500" ry="15" fill="#696969" />
      <circle cx="368" cy="432" r="17.500" fill="none" stroke="#939393" strokeWidth="0.600" />
      <path d="M363 431 365 416 363 415 367 405 369 416 368 417 366 431Z" fill="#c9121f" />
      <path d="M721 497 733 495 776 520 763 523Z" fill="#5f5f5f" />
      <path d="M721 497 763 523 765 608 722 579Z" fill="#838383" stroke="#8f8f8f" strokeWidth="0.600" />
      <path d="M763 523 776 520 777 606 765 608Z" fill="#636363" />
      <path d="M722 528 724 531 726 544 730 553H733L732 543 734 531Z" fill="#c9121f" />
      <path d="M727 531 734 530 731 543Z" fill="#8d0d15" />
      <path d="M722 522 731 525 732 529 729 531 722 528Z" fill="#23b62e" />
      <path d="M722 522 731 525 730 527 722 525Z" fill="#56dd5c" />
    </Scene>
  );
}

const viewIcons = {
  "Show and hide": (
    <>
      <path d="M1 9Q6 2 15 4L17 9Q13 15 7 14Z" fill="#bbb" stroke="#444" strokeWidth="1.200" />
      <circle cx="11" cy="9" r="3.500" fill="#555" />
      <circle cx="11" cy="8" r="1.200" fill="#eee" />
      <path d="M2 7Q8 1 15 3" stroke="#777" strokeWidth="1.500" fill="none" />
    </>
  ),
  Snapshot: (
    <>
      <path d="M1 5 5 3 8 5V14L4 15 1 13Z" fill="#555" />
      <path d="M8 6 15 4 17 6V13L9 15Z" fill="url(#steel)" stroke="#555" strokeWidth="0.600" />
      <circle cx="11" cy="10" r="3" fill="#ddd" stroke="#333" />
      <path d="M10 5V2H13V4" fill="#777" />
    </>
  ),
  Explode: (
    <>
      <path d="M4 5 13 3 14 9 7 12Z" fill="url(#steel)" stroke="#555" strokeWidth="0.600" />
      <path d="M1 2 8 4 17 3M1 5 5 12 12 16M6 11 17 8M8 12V17" stroke="#c32630" strokeWidth="1.200" fill="none" />
    </>
  ),
  Views: (
    <>
      <path d="M5 2H16V13H5Z" fill="#c2262f" />
      <path d="M6 3H11V8H6Z" fill="#de666c" />
      <path d="M3 2V15H17M3 1 1.500 4H4.500ZM17 15 14 13.500V16.500ZM3 15 1 17" stroke="#5f6368" strokeWidth="1.200" fill="none" />
    </>
  ),
  Fit: (
    <>
      <path d="M11 11 16 16" stroke="#8b3a2c" strokeWidth="2.500" strokeLinecap="round" />
      <circle cx="8" cy="7.500" r="6" fill="#ddd" stroke="#777" strokeWidth="1.500" />
      <path d="M5 5 8 4 11 5V10L8 11 5 10Z" fill="#b9202a" />
      <path d="M8 6 11 5V10L8 11Z" fill="#53151a" />
    </>
  ),
  Section: (
    <>
      <path d="M2 3Q9 1 13 4 17 8 16 14L11 15Q8 16 8 13L4 15 2 12 6 9Z" fill="url(#steel)" stroke="#444" strokeWidth="0.800" />
      <path d="M2 4 6 6 6 9 3 12 6 14 9 13" stroke="#c2262f" strokeWidth="1.200" fill="none" />
      <circle cx="11" cy="9" r="2" fill="#e3e7ee" stroke="#555" />
    </>
  ),
};

export default function App() {
  const [activeMenu, setActiveMenu] = useState("Structure");

  return (
    <Screen>
      <GlobalStyle />
      <Gradients />
      <Window>
        <TitleBar>
          <svg width="12" height="12" viewBox="0 0 12 12">
            <rect width="12" height="12" rx="1" fill="#f3e6da" />
            <path d="M12 0V12H6Q9 8 12 0Z" fill="#ee8a2d" />
            <path d="M1 1 11 11M1 11 10 2M6 2H10V6" stroke="#e2632c" strokeWidth="1.500" fill="none" />
          </svg>
          <Title>Exercise_1_solved.stmod - Altair Inspire 2020</Title>
          <WindowButtons>
            <WindowButton aria-label="Minimize">
              <svg width="9" height="9" stroke="#f6e6f5">
                <path d="M0 4.500H9" />
              </svg>
            </WindowButton>
            <WindowButton aria-label="Restore">
              <svg width="9" height="9" stroke="#f6e6f5" fill="none">
                <path d="M.5 2.500H6.500V8.500H.5ZM2.500 2.500V.5H8.500V6.500H6.500" />
              </svg>
            </WindowButton>
            <WindowButton aria-label="Close">
              <svg width="9" height="9" stroke="#f6e6f5">
                <path d="M.5 .5 8.500 8.500M8.500 .5 .5 8.500" />
              </svg>
            </WindowButton>
          </WindowButtons>
          <Pointer width="10" height="14" viewBox="0 0 10 14">
            <path d="M1 0V11L3.500 9 5.500 13.500 7.500 12.500 5.500 8.500H9Z" fill="#fff" stroke="#333" strokeWidth="0.500" />
          </Pointer>
        </TitleBar>

        <RibbonArea>
          <Menu>
            {menus.map((name) => (
              <MenuItem key={name} $active={name === activeMenu} onClick={() => setActiveMenu(name)}>
                {name}
              </MenuItem>
            ))}
            <MenuItem aria-label="Add ribbon">
              <svg width="8" height="8" stroke="#8d969d">
                <path d="M4 0V8M0 4H8" />
              </svg>
            </MenuItem>
          </Menu>
          <Ribbon>
            {groups.map((group, i) => (
              <Group key={group.label} $width={group.width} $last={i === groups.length - 1}>
                <Tools $start={group.start}>
                  {group.tools.map(([name, icon, width]) => (
                    <Tool key={name} $width={width}>
                      <svg width="44" height="44" viewBox="0 0 44 44">
                        {icons[icon]}
                      </svg>
                      <span>{name}</span>
                    </Tool>
                  ))}
                </Tools>
                <GroupLabel>
                  {group.label}
                  {group.more && <Arrow />}
                </GroupLabel>
              </Group>
            ))}
          </Ribbon>
        </RibbonArea>

        <Main>
          <Side>
            <PanelHead>
              <span>Model</span>
              <HeadButtons>
                <HeadButton aria-label="Find">
                  <svg width="9" height="8" viewBox="0 0 9 8" fill="none" stroke="#555a61">
                    <path d="M1 7V4L2.500 1H6.500L8 4V7H5.500V4H3.500V7Z" />
                  </svg>
                </HeadButton>
                <HeadButton aria-label="Search">
                  <svg width="8" height="8" viewBox="0 0 8 8" fill="none" stroke="#555a61">
                    <circle cx="3.500" cy="3.500" r="2.500" />
                    <path d="M5 5 7.500 7.500" />
                  </svg>
                </HeadButton>
                <HeadButton aria-label="Close model browser">
                  <Cross />
                </HeadButton>
              </HeadButtons>
            </PanelHead>
            <TreeBox>
              <TreeBody>
                <TreeHead>Object</TreeHead>
                <Tree>
                  {tree.map((row, i) => (
                    <Row key={i} $depth={row.depth} $off={row.off}>
                      {row.open && <Toggle aria-label={`Collapse ${row.text}`} />}
                      {row.radio && <Radio type="radio" name="design" id={`row-${i}`} defaultChecked={row.focus} />}
                      <RowIcon viewBox="0 0 12 12" $off={row.off}>
                        {rowIcons[row.icon]}
                      </RowIcon>
                      <RowText as={row.radio ? "label" : "span"} htmlFor={row.radio ? `row-${i}` : undefined} $focus={row.focus}>
                        {row.text}
                      </RowText>
                    </Row>
                  ))}
                </Tree>
              </TreeBody>
              <ScrollBar>
                <svg width="7" height="7" viewBox="0 0 7 7" fill="none" stroke="#777">
                  <path d="M1.500 4.500 3.500 2.500 5.500 4.500" />
                </svg>
                <Thumb />
                <svg width="7" height="7" viewBox="0 0 7 7" fill="none" stroke="#777">
                  <path d="M1.500 2.500 3.500 4.500 5.500 2.500" />
                </svg>
              </ScrollBar>
            </TreeBox>
            <PanelHead>
              <span>Property Editor</span>
              <HeadButton aria-label="Close property editor">
                <Cross />
              </HeadButton>
            </PanelHead>
            <PropertyBox>
              <PropertyTable>
                <thead>
                  <tr>
                    <th>Name</th>
                    <th>Value</th>
                  </tr>
                </thead>
              </PropertyTable>
            </PropertyBox>
          </Side>

          <Viewport>
            <ModelScene />
            <Triad width="60" height="66" viewBox="212 544 60 66">
              <path d="M264 595 253 590 252 592 246 587 256 585 255 588 265 592Z" fill="#bb1e26" />
              <path d="M266 593 238 596 239 593 227 598 239 601 238 599 266 596Z" fill="#27b52b" />
              <path d="M239 593 227 598 238 597Z" fill="#6cf06c" />
              <path d="M263 595V570H260L264.500 558 269 570H266V595Z" fill="#3030a8" />
              <path d="M260 570 264.500 558 264 570Z" fill="#6a6af0" />
              <g fontSize="9" fill="#33373c">
                <text x="262" y="555">Z</text>
                <text x="241" y="589">X</text>
                <text x="217" y="603">Y</text>
              </g>
            </Triad>
            <ViewTools>
              {Object.entries(viewIcons).map(([name, drawing]) => (
                <ViewTool key={name} aria-label={name}>
                  <svg width="18" height="18" viewBox="0 0 18 18">
                    {drawing}
                  </svg>
                </ViewTool>
              ))}
            </ViewTools>
          </Viewport>
        </Main>

        <StatusBar>
          <svg width="9" height="9" viewBox="0 0 9 9" fill="none" stroke="#444a51">
            <circle cx="4.500" cy="4.500" r="2.500" />
            <path d="M4.500 0V3M4.500 6V9M0 4.500H3M6 4.500H9" />
          </svg>
          <span>MMKS (mm kg N s)</span>
        </StatusBar>
      </Window>
    </Screen>
  );
}
